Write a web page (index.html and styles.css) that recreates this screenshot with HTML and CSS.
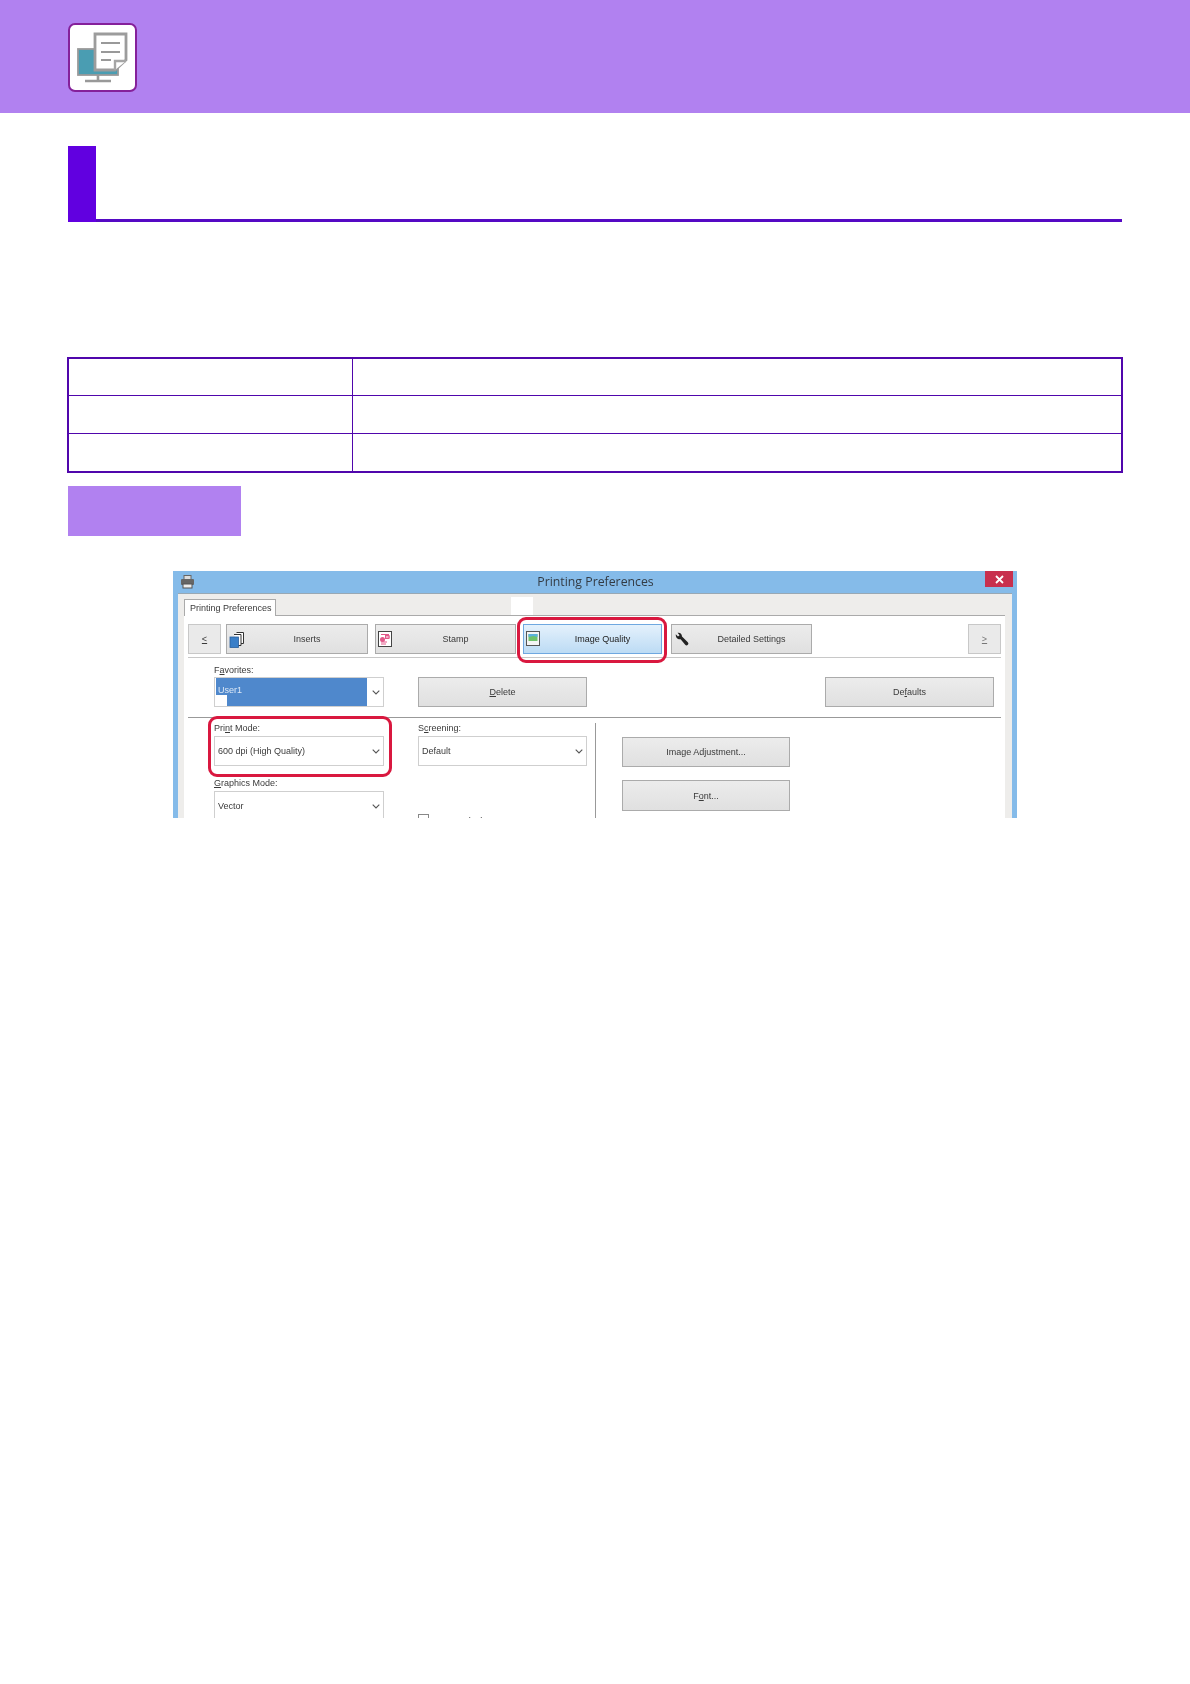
FILE: index.html
```html
<!DOCTYPE html>
<html lang="en">
<head>
<meta charset="utf-8">
<title>Printing Preferences</title>
<link rel="stylesheet" href="styles.css">
</head>
<body>
<svg class="defs" width="0" height="0" aria-hidden="true">
  <symbol id="chev" viewBox="0 0 8 5"><polyline points="0.7,0.7 4,4 7.3,0.7" fill="none" stroke="#555" stroke-width="1.1"/></symbol>
</svg>
<header class="banner">
  <div class="banner-icon">
    <svg width="65" height="65" viewBox="0 0 65 65">
      <rect x="8" y="24" width="40" height="26" fill="#4a9db2" stroke="#9a9a9a" stroke-width="1.8"/>
      <path d="M28 50v6M15 56h26" stroke="#999" stroke-width="2.6" fill="none"/>
      <path d="M25 9h31v26L45 45H25z" fill="#fff" stroke="#9c9c9c" stroke-width="2.8"/>
      <path d="M31 18h19M31 27h19M31 35h10" stroke="#999" stroke-width="2" fill="none"/>
      <path d="M45 45V36h11" fill="#fff" stroke="#a5a5a5" stroke-width="2.4"/>
    </svg>
  </div>
</header>

<main class="content">
  <div class="heading"><span class="heading-bar"></span></div>

  <table class="info">
    <tr><td class="info-key"></td><td></td></tr>
    <tr><td class="info-key"></td><td></td></tr>
    <tr class="info-last"><td class="info-key"></td><td></td></tr>
  </table>

  <div class="tag"></div>

  <div class="dialog">
    <div class="titlebar">
      <svg class="printer" width="15" height="14" viewBox="0 0 15 14">
        <rect x="4" y="0.5" width="7" height="4" fill="#ddd" stroke="#666"/>
        <rect x="1" y="4" width="13" height="6" rx="1" fill="#666"/>
        <rect x="3" y="9" width="9" height="4" fill="#eee" stroke="#555"/>
      </svg>
      <span class="title">Printing Preferences</span>
      <span class="close">
        <svg width="9" height="9" viewBox="0 0 9 9"><path d="M1 1l7 7M8 1l-7 7" stroke="#fff" stroke-width="1.8"/></svg>
      </span>
    </div>
    <div class="frame">
      <div class="tabstrip">
        <span class="tab">Printing Preferences</span>
        <span class="notch"></span>
      </div>
      <div class="panel">
        <div class="toolbar">
          <span class="btn nav"><u>&lt;</u></span>
          <span class="btn tool w142">
            <svg class="tool-icon" width="16" height="17" viewBox="0 0 16 17">
              <path d="M7.5 1.5h7v11h-3" fill="#fff" stroke="#333"/>
              <path d="M5 3.500h7v11H9" fill="#fff" stroke="#333"/>
              <rect x="1" y="6" width="8.500" height="10.500" fill="#3a7fc8" stroke="#2a5f9c" stroke-width=".8"/>
            </svg>
            Inserts
          </span>
          <span class="btn tool w141">
            <svg class="tool-icon" width="14" height="16" viewBox="0 0 14 16">
              <rect x=".5" y=".5" width="13" height="15" fill="#fff" stroke="#444"/>
              <path d="M3 3.500h8M7 6h5M3 11h6M3 13h5" stroke="#e2588a" fill="none"/>
              <circle cx="4.500" cy="8.500" r="2.500" fill="#e2588a"/>
              <rect x="7.500" y="4.500" width="3.500" height="3" fill="none" stroke="#e2588a"/>
            </svg>
            Stamp
          </span>
          <span class="btn tool active">
            <svg class="tool-icon" width="14" height="15" viewBox="0 0 14 15">
              <rect x=".5" y=".5" width="13" height="14" fill="#f4f4f4" stroke="#555"/>
              <rect x="2.500" y="3" width="9" height="7" fill="#6fc26a"/>
              <path d="M2.500 3h9v3l-4-1-5 1z" fill="#5cb2dc"/>
            </svg>
            Image Quality
          </span>
          <span class="btn tool w141 plain-icon">
            <svg class="tool-icon" width="14" height="14" viewBox="0 0 14 14">
              <path d="M.8 2.200L3 4.400 4.600 3.200 2.600 .8C5 .2 7 2 7 4.400L8 5.400 12.800 10.200C13.600 11 13.600 12 12.800 12.800 12 13.600 11 13.600 10.200 12.800L5.600 7.200C3 7.800 .4 5.500 .8 2.200Z" fill="#222"/>
            </svg>
            Detailed Settings
          </span>
          <span class="btn nav disabled"><u>&gt;</u></span>
        </div>

        <div class="favorites">
          <div class="col1">
            <div class="label">F<u>a</u>vorites:</div>
            <div class="combo fav">
              <span class="fav-sel">User1</span>
              <svg class="chev" width="8" height="5"><use href="#chev"/></svg>
            </div>
          </div>
          <span class="btn big delete"><span><u>D</u>elete</span></span>
          <span class="btn big defaults"><span>De<u>f</u>aults</span></span>
        </div>

        <div class="settings">
          <div class="col1">
            <div class="label">Pri<u>n</u>t Mode:</div>
            <div class="combo"><span>600 dpi (High Quality)</span><svg class="chev" width="8" height="5"><use href="#chev"/></svg></div>
            <div class="label second"><u>G</u>raphics Mode:</div>
            <div class="combo"><span>Vector</span><svg class="chev" width="8" height="5"><use href="#chev"/></svg></div>
          </div>
          <div class="col2">
            <div class="label">S<u>c</u>reening:</div>
            <div class="combo"><span>Default</span><svg class="chev" width="8" height="5"><use href="#chev"/></svg></div>
            <div class="check"><span class="box"></span><span>Text To Black</span></div>
          </div>
          <div class="vrule"></div>
          <div class="col3">
            <span class="btn side">Image Adjustment...</span>
            <span class="btn side tall">F<u>o</u>nt...</span>
          </div>
        </div>
      </div>
    </div>
    <div class="callout callout-tab"></div>
    <div class="callout callout-mode"></div>
  </div>
</main>
</body>
</html>
```

FILE: styles.css
```css
* { box-sizing: border-box; }

html, body {
  margin: 0;
  padding: 0;
  background: #fff;
}

body {
  font-family: "Liberation Sans", Arial, sans-serif;
  color: #333;
}

.defs { position: absolute; }

/* Page furniture */
.banner {
  height: 113px;
  background: #b181f0;
  padding: 23px 0 0 68px;
}

.banner-icon {
  width: 69px;
  height: 69px;
  background: #fff;
  border: 2px solid #85209a;
  border-radius: 7px;
}

.banner-icon svg { display: block; }

.content {
  padding: 33px 0 0 68px;
}

.heading {
  width: 1054px;
  height: 76px;
  border-bottom: 3px solid #5509c4;
}

.heading-bar {
  display: block;
  width: 28px;
  height: 76px;
  background: #6100e0;
}

.info {
  width: 1056px;
  height: 116px;
  margin: 135px 0 0 -1px;
  border-collapse: collapse;
  border: 2px solid #5006ac;
}

.info td {
  height: 37px;
  padding: 0;
  border: 1px solid #5006ac;
}

.info .info-last td { height: 38px; }

.info-key { width: 284px; }

.tag {
  width: 173px;
  height: 50px;
  margin-top: 13px;
  background: #b181f0;
}

/* Dialog screenshot */
.dialog {
  position: relative;
  width: 844px;
  height: 247px;
  margin: 35px 0 0 105px;
  padding: 0 5px;
  overflow: hidden;
  background: #85bbe9;
  font-size: 9px;
  line-height: 14px;
  color: #3a3a3a;
  filter: blur(.45px);
}

.titlebar {
  display: grid;
  grid-template-columns: 1fr auto 1fr;
  align-items: start;
  height: 22px;
  margin-right: -1px;
}

.printer { margin: 4px 0 0 2px; }

.title {
  font-family: "Open Sans", sans-serif;
  font-size: 12.3px;
  line-height: 22px;
  color: #333b44;
}

.close {
  display: flex;
  align-items: center;
  justify-content: center;
  justify-self: end;
  width: 28px;
  height: 16px;
  background: #c8304e;
}

.frame {
  height: 225px;
  background: #eeedeb;
  border-top: 1px solid #98a8b4;
  padding: 0 7px 0 6px;
}

.tabstrip {
  display: flex;
  height: 21px;
}

.tab {
  width: 92px;
  height: 17px;
  margin-top: 5px;
  padding: 1px 0 0 5px;
  background: #fff;
  border: 1px solid #aaa;
  border-bottom: 0;
  white-space: nowrap;
}

.notch {
  width: 22px;
  height: 18px;
  margin: 3px 0 0 235px;
  background: #fff;
}

.panel {
  height: 203px;
  padding: 0 4px;
  background: #fff;
  border-top: 1px solid #aaa;
}

/* Buttons */
.btn {
  display: flex;
  align-items: center;
  justify-content: center;
  height: 30px;
  background: linear-gradient(#ececec, #e0e0e0);
  border: 1px solid #ababab;
  white-space: nowrap;
}

.toolbar {
  display: flex;
  height: 42px;
  padding: 8px 0 3px;
  border-bottom: 1px solid #c8c8c8;
}

.nav {
  width: 33px;
  margin-right: 5px;
  background: #eaeaea;
  border-color: #c8c8c8;
}

.disabled {
  margin: 0 0 0 auto;
  color: #777;
}

.tool {
  position: relative;
  margin-right: 7px;
  padding-left: 20px;
}

.w142 { width: 142px; }
.w141 { width: 141px; }

.tool-icon {
  position: absolute;
  left: 2px;
  top: 6px;
}

.active {
  width: 139px;
  margin-right: 9px;
  padding-left: 20px;
  background: linear-gradient(#e4f1fc, #bcdbf4);
  border-color: #6fa8e0;
  color: #222;
}

.plain-icon {
  margin-right: 0;
  padding-left: 20px;
}

.plain-icon .tool-icon { left: 3px; top: 7px; }

/* Favorites row */
.favorites {
  display: flex;
  height: 59px;
  padding: 5px 7px 0 26px;
}

.label {
  height: 14px;
}

.combo {
  display: flex;
  align-items: center;
  justify-content: space-between;
  height: 30px;
  margin-top: 1px;
  padding: 0 3px 0 3px;
  background: #fff;
  border: 1px solid #cfcfcf;
}

.col1 { width: 170px; }

.fav {
  height: 30px;
  margin-top: 0;
  padding: 0 3px 0 1px;
  align-items: stretch;
}

.fav-sel {
  width: 151px;
  padding: 5px 0 0 2px;
  background:
    linear-gradient(#4f88cc, #4f88cc) top / 100% 17px no-repeat,
    linear-gradient(#4f88cc, #4f88cc) right / 140px 100% no-repeat;
  color: #dce8f6;
}

.fav .chev { align-self: center; }

.big {
  width: 169px;
  height: 30px;
  margin-top: 14px;
}

.delete { margin-left: 34px; }
.defaults { margin-left: auto; }

/* Lower settings */
.settings {
  display: flex;
  padding: 3px 0 0 26px;
  border-top: 1px solid #999;
}

.second { margin-top: 10px; }

.col2 {
  width: 169px;
  margin-left: 34px;
}

.check {
  display: flex;
  gap: 3px;
  margin-top: 48px;
}

.box {
  width: 11px;
  height: 11px;
  background: #fff;
  border: 1px solid #888;
}

.vrule {
  width: 1px;
  height: 100px;
  margin: 2px 0 0 8px;
  background: #999;
}

.col3 {
  display: flex;
  flex-direction: column;
  gap: 13px;
  width: 168px;
  margin-left: 26px;
  padding-top: 16px;
}

.side { height: 30px; }
.tall { height: 31px; }

/* Red highlights over the screenshot */
.callout {
  position: absolute;
  border: 3px solid #d9183f;
  border-radius: 9px;
}

.callout-tab {
  left: 344px;
  top: 46px;
  width: 150px;
  height: 46px;
}

.callout-mode {
  left: 35px;
  top: 145px;
  width: 184px;
  height: 61px;
}
```
